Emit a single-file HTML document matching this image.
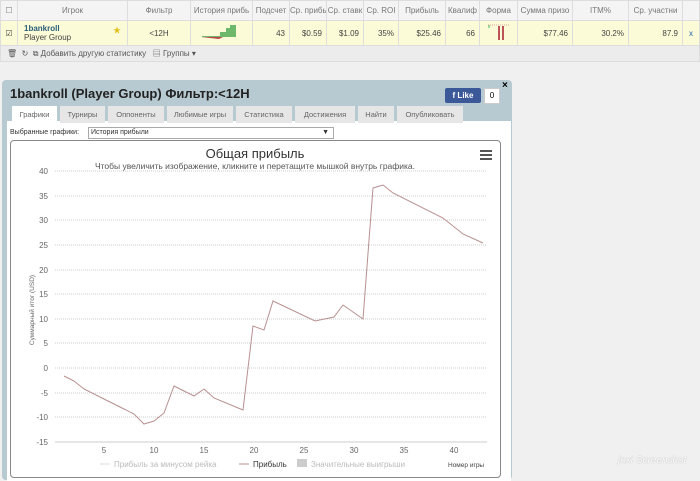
<!DOCTYPE html>
<html><head><meta charset="utf-8"><style>
body{margin:0;width:700px;height:478px;overflow:hidden;background:#f0f0f0;font-family:"Liberation Sans","Noto Sans CJK SC",sans-serif;position:relative}
.a{position:absolute;white-space:nowrap}
table{border-collapse:collapse;position:absolute;left:0;top:0;width:700px;font-size:8px;color:#555;table-layout:fixed}
td{border:1px solid #ddd;text-align:center;padding:0;white-space:nowrap;overflow:hidden}
</style></head><body>
<table>
<colgroup><col style="width:17px"><col style="width:110px"><col style="width:63px"><col style="width:62px"><col style="width:37px"><col style="width:37px"><col style="width:37px"><col style="width:35px"><col style="width:47px"><col style="width:34px"><col style="width:38px"><col style="width:55px"><col style="width:56px"><col style="width:54px"><col></colgroup>
<tr style="height:20px;background:#f4f4f4;color:#777">
<td>☐</td><td>Игрок</td><td>Фильтр</td><td>История прибь</td><td>Подсчет</td><td>Ср. прибь</td><td>Ср. ставк</td><td>Ср. ROI</td><td>Прибыль</td><td>Квалиф</td><td>Форма</td><td>Сумма призо</td><td>ITM%</td><td>Ср. участни</td><td></td></tr>
<tr style="height:25px;background:#fbfbd8;color:#444">
<td>☑</td><td style="text-align:left;padding-left:6px;position:relative"><b style="color:#2a5f7a">1bankroll</b><br>Player Group<span style="position:absolute;right:6px;top:4px;color:#e0c020">★</span></td><td>&lt;12H</td><td><svg width="50" height="20"><path d="M5 14h18v-4h6v-4h4v-3h6v12h-34z" fill="#6db86b"/><path d="M4 15h22l-4 2z" fill="#b44"/></svg></td><td style="text-align:right;padding-right:4px">43</td><td style="text-align:right;padding-right:4px">$0.59</td><td style="text-align:right;padding-right:4px">$1.09</td><td style="text-align:right;padding-right:4px">35%</td><td style="text-align:right;padding-right:4px">$25.46</td><td style="text-align:right;padding-right:4px">66</td><td><svg width="30" height="20"><rect x="4" y="3" width="2" height="3" fill="#9d9"/><rect x="14" y="4" width="2" height="14" fill="#b55"/><rect x="18" y="4" width="2" height="14" fill="#b55"/><path d="M4 3h22" stroke="#b55" stroke-dasharray="1 1" stroke-width=".6"/></svg></td><td style="text-align:right;padding-right:4px">$77.46</td><td style="text-align:right;padding-right:4px">30.2%</td><td style="text-align:right;padding-right:4px">87.9</td><td style="color:#26a">x</td></tr>
<tr style="height:16px;background:#ececec"><td colspan="15" style="text-align:left;padding-left:6px;color:#555">🗑 &nbsp;↻ &nbsp;⧉ Добавить другую статистику &nbsp;&nbsp;▤ Группы ▾</td></tr>
</table>
<div class="a" style="left:2px;top:80px;width:510px;height:400px;background:#b8cad1;border-radius:4px"></div>
<div class="a" style="left:10px;top:86px;font-size:13px;font-weight:bold;color:#222">1bankroll (Player Group) Фильтр:&lt;12H</div>
<div class="a" style="left:445px;top:88px;width:36px;height:15px;background:#3b5998;color:#fff;font-size:8px;font-weight:bold;line-height:15px;text-align:center;border-radius:2px">f Like</div>
<div class="a" style="left:484px;top:88px;width:14px;height:14px;background:#fff;border:1px solid #ccc;font-size:8px;text-align:center;line-height:14px">0</div>
<div class="a" style="left:502px;top:80px;font-size:10px;font-weight:bold">×</div>
<div class="a" style="left:7px;top:121px;width:504px;height:360px;background:#fff"></div>
<div class="a" style="top:106px;left:12px;font-size:7.5px;color:#666;display:flex;gap:3px">
<span style="background:#fff;padding:4px 5px;width:35px;text-align:center">Графики</span>
<span style="background:#e6e6e6;padding:4px 5px;width:35px;text-align:center">Турниры</span>
<span style="background:#e6e6e6;padding:4px 5px;width:46px;text-align:center">Оппоненты</span>
<span style="background:#e6e6e6;padding:4px 5px;width:56px;text-align:center">Любимые игры</span>
<span style="background:#e6e6e6;padding:4px 5px;width:46px;text-align:center">Статистика</span>
<span style="background:#e6e6e6;padding:4px 5px;width:50px;text-align:center">Достижения</span>
<span style="background:#e6e6e6;padding:4px 5px;width:26px;text-align:center">Найти</span>
<span style="background:#e6e6e6;padding:4px 5px;width:56px;text-align:center">Опубликовать</span></div>
<div class="a" style="left:10px;top:129px;font-size:7px;color:#333">Выбранные графики:</div>
<div class="a" style="left:88px;top:127px;width:242px;height:10px;border:1px solid #aaa;font-size:7px;color:#333;padding-left:2px;line-height:10px">История прибыли<span style="position:absolute;right:4px">▼</span></div>
<div class="a" style="left:10px;top:140px;width:489px;height:336px;border:1px solid #888;border-radius:4px"></div>
<div class="a" style="left:0;width:510px;top:146px;text-align:center;font-size:13px;color:#333">Общая прибыль</div>
<div class="a" style="left:0;width:510px;top:161px;text-align:center;font-size:8.5px;color:#555">Чтобы увеличить изображение, кликните и перетащите мышкой внутрь графика.</div>
<div class="a" style="left:480px;top:150px;width:12px;height:2px;background:#555;box-shadow:0 4px #555,0 8px #555"></div>
<svg class="a" style="left:0;top:0" width="700" height="478" font-family="Liberation Sans" font-size="8" fill="#666">
<g stroke="#ccc" stroke-dasharray="1 1">
<path d="M55 171H487M55 196H487M55 220H487M55 245H487M55 270H487M55 294H487M55 319H487M55 343H487M55 368H487M55 393H487M55 417H487"/></g>
<path d="M55 442H487" stroke="#ccc"/>
<g text-anchor="end"><text x="48" y="174">40</text><text x="48" y="199">35</text><text x="48" y="223">30</text><text x="48" y="248">25</text><text x="48" y="273">20</text><text x="48" y="297">15</text><text x="48" y="322">10</text><text x="48" y="346">5</text><text x="48" y="371">0</text><text x="48" y="396">-5</text><text x="48" y="420">-10</text><text x="48" y="445">-15</text></g>
<g text-anchor="middle"><text x="104" y="453">5</text><text x="154" y="453">10</text><text x="204" y="453">15</text><text x="254" y="453">20</text><text x="304" y="453">25</text><text x="354" y="453">30</text><text x="404" y="453">35</text><text x="454" y="453">40</text></g>
<text x="34" y="310" font-size="6.5" transform="rotate(-90 34 310)" text-anchor="middle">Суммарный итог (USD)</text>
<polyline fill="none" stroke="#b89090" stroke-width="1" points="64,376 74,381 84,389 104,399 124,409 134,414 144,424 154,421 164,413 174,386 194,396 204,389 214,398 243,410 253,326 264,330 273,301 315,321 334,317 343,305 363,319 373,188 383,185 393,193 443,218 463,234 483,243"/>
<path d="M100 464h10" stroke="#ddd"/><text x="114" y="467" fill="#bbb">Прибыль за минусом рейка</text>
<path d="M239 464h10" stroke="#b89090"/><text x="253" y="467" fill="#333">Прибыль</text>
<rect x="297" y="459" width="10" height="8" fill="#ccc"/><text x="311" y="467" fill="#bbb">Значительные выигрыши</text>
<text x="448" y="467" font-size="6.5" fill="#444">Номер игры</text>
</svg>
<div class="a" style="left:618px;top:455px;font-size:10px;color:#fff;font-style:italic;text-shadow:0 0 1px #999">joxi Screenshot</div>
</body></html>
